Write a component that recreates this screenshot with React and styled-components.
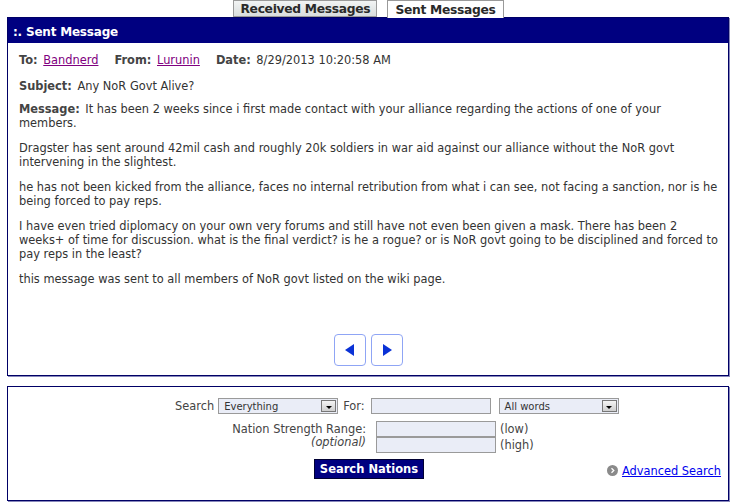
import React from "react";
import styled, { createGlobalStyle } from "styled-components";

const Global = createGlobalStyle`
  html, body { margin: 0; padding: 0; background: #fff; }
  body { font-family: "DejaVu Sans", Verdana, sans-serif; font-size: 11.4px; color: #333; }
`;

const Page = styled.div`
  width: 731px;
  height: 504px;
  box-sizing: border-box;
  padding: 0 2px 0 7px;
  display: flex;
  flex-direction: column;
`;

const Tabs = styled.div`
  display: flex;
  justify-content: center;
  gap: 10px;
  height: 17px;
  padding-left: 1px;
  position: relative;
  z-index: 1;
`;

const Tab = styled.div`
  box-sizing: border-box;
  height: ${(p) => (p.$active ? "18px" : "17px")};
  padding: 0 ${(p) => (p.$active ? "7px" : "6px")};
  border: 1px solid #9a9a9a;
  border-bottom: ${(p) => (p.$active ? "none" : "1px solid #9a9a9a")};
  background: ${(p) => (p.$active ? "#fff" : "linear-gradient(#f2f4f4, #d9dddd)")};
  font-family: "DejaVu Sans", Tahoma, sans-serif;
  font-weight: bold;
  font-size: 12.3px;
  letter-spacing: -0.3px;
  color: #2a2a2a;
  line-height: 16px;
  padding-top: ${(p) => (p.$active ? "1px" : "0")};
  white-space: nowrap;
`;

const Panel = styled.div`
  box-sizing: border-box;
  border: 1px solid #000066;
  box-shadow: 1px 1px 0 #8888bb;
  display: flex;
  flex-direction: column;
  height: ${(p) => p.$h}px;
  margin-top: ${(p) => p.$mt || 0}px;
  background: #fff;
`;

const Header = styled.div`
  height: 25px;
  background: #000080;
  color: #fff;
  font-weight: bold;
  font-size: 12px;
  letter-spacing: -0.2px;
  line-height: 28px;
  padding-left: 5px;
`;

const Body = styled.div`
  padding: 10px 11px 0 11px;
  flex: 1;
  display: flex;
  flex-direction: column;
`;

const Para = styled.p`
  margin: 0 0 ${(p) => (p.$mb !== undefined ? p.$mb : 11)}px 0;
  line-height: 14px;
  font-size: 11.4px;
  white-space: nowrap;
`;

const Label = styled.b`
  font-weight: bold;
  color: #444;
  margin-right: 2px;
`;

const UserLink = styled.a`
  color: #800080;
  text-decoration: underline;
  margin-right: 16px;
`;

const Nav = styled.div`
  margin-top: auto;
  margin-bottom: 9px;
  display: flex;
  justify-content: center;
  gap: 5px;
`;

const NavBtn = styled.button`
  width: 32px;
  height: 32px;
  border: 1px solid #8fa5f5;
  border-radius: 4px;
  background: #fff;
  padding: 0;
  display: flex;
  align-items: center;
  justify-content: center;
`;

const SearchBody = styled.div`
  display: flex;
  flex-direction: column;
  padding-top: 11px;
`;

const Row = styled.div`
  display: flex;
  align-items: center;
  padding-left: ${(p) => p.$pl || 0}px;
  height: ${(p) => p.$h || 16}px;
`;

const Text = styled.span`
  font-size: 11.4px;
  color: #444;
  margin: 0 ${(p) => p.$mr || 0}px 0 ${(p) => p.$ml || 0}px;
  font-style: ${(p) => (p.$italic ? "italic" : "normal")};
  white-space: nowrap;
`;

const SelectBox = styled.div`
  box-sizing: border-box;
  width: ${(p) => p.$w}px;
  height: 16px;
  border: 1px solid #9a9a9a;
  background: #eaedf7;
  display: flex;
  align-items: center;
  justify-content: space-between;
  padding: 0 1px 0 5px;
  font-size: 10px;
  color: #333;
`;

const Arrow = styled.span`
  box-sizing: border-box;
  width: 15px;
  height: 12px;
  border: 1px solid #777;
  background: linear-gradient(#f4f4f4, #cfcfcf);
  display: flex;
  align-items: flex-end;
  justify-content: center;
  padding-bottom: 2px;
  &::after {
    content: "";
    border-left: 3px solid transparent;
    border-right: 3px solid transparent;
    border-top: 3px solid #000;
  }
`;

const Input = styled.div`
  box-sizing: border-box;
  width: ${(p) => p.$w}px;
  height: ${(p) => p.$h || 16}px;
  border: 1px solid #9a9a9a;
  background: #eaedf7;
  margin: 0 ${(p) => p.$mr || 0}px 0 ${(p) => p.$ml || 0}px;
`;

const RangeWrap = styled.div`
  display: flex;
  margin-top: 7px;
`;

const RangeLabel = styled.div`
  width: 358px;
  text-align: right;
  display: flex;
  flex-direction: column;
  align-items: flex-end;
  line-height: 13px;
  padding-top: 2px;
`;

const RangeInputs = styled.div`
  display: flex;
  flex-direction: column;
  margin-left: 10px;
`;

const RangeRow = styled.div`
  display: flex;
  align-items: center;
  height: 16px;
`;

const ButtonRow = styled.div`
  display: grid;
  grid-template-columns: 1fr auto 1fr;
  align-items: center;
  margin-top: 6px;
`;

const SearchButton = styled.button`
  grid-column: 2;
  background: #000080;
  color: #fff;
  border: 1px solid #000033;
  font-family: "DejaVu Sans", Verdana, sans-serif;
  font-weight: bold;
  font-size: 11.5px;
  height: 20px;
  padding: 0 5px;
  margin-left: 2px;
`;

const Advanced = styled.div`
  grid-column: 3;
  justify-self: end;
  display: flex;
  align-items: center;
  gap: 4px;
  padding-right: 7px;
  padding-top: 3px;
`;

const AdvLink = styled.a`
  color: #0000ee;
  text-decoration: underline;
  font-size: 11.4px;
`;

const Dot = () => (
  <svg width="11" height="11" viewBox="0 0 11 11">
    <circle cx="5.5" cy="5.5" r="5.5" fill="#8a8a8a" />
    <path d="M4.5 3.2 L6.8 5.5 L4.5 7.8" stroke="#fff" strokeWidth="1.3" fill="none" />
  </svg>
);

const Tri = ({ dir }) => (
  <svg width="10" height="12" viewBox="0 0 10 12">
    {dir === "left" ? (
      <polygon points="9,0 9,12 0,6" fill="#0a32d6" />
    ) : (
      <polygon points="1,0 1,12 10,6" fill="#0a32d6" />
    )}
  </svg>
);

export default function App() {
  return (
    <>
      <Global />
      <Page>
        <Tabs>
          <Tab>Received Messages</Tab>
          <Tab $active>Sent Messages</Tab>
        </Tabs>
        <Panel $h={359}>
          <Header>:. Sent Message</Header>
          <Body>
            <Para $mb={12}>
              <Label>To:</Label> <UserLink href="#">Bandnerd</UserLink>
              <Label>From:</Label> <UserLink href="#">Lurunin</UserLink>
              <Label>Date:</Label> 8/29/2013 10:20:58 AM
            </Para>
            <Para $mb={9}>
              <Label>Subject:</Label> Any NoR Govt Alive?
            </Para>
            <Para>
              <Label>Message:</Label> It has been 2 weeks since i first made contact with your alliance regarding the actions of one of your
              <br />
              members.
            </Para>
            <Para>
              Dragster has sent around 42mil cash and roughly 20k soldiers in war aid against our alliance without the NoR govt
              <br />
              intervening in the slightest.
            </Para>
            <Para>
              he has not been kicked from the alliance, faces no internal retribution from what i can see, not facing a sanction, nor is he
              <br />
              being forced to pay reps.
            </Para>
            <Para>
              I have even tried diplomacy on your own very forums and still have not even been given a mask. There has been 2
              <br />
              weeks+ of time for discussion. what is the final verdict? is he a rogue? or is NoR govt going to be disciplined and forced to
              <br />
              pay reps in the least?
            </Para>
            <Para>this message was sent to all members of NoR govt listed on the wiki page.</Para>
            <Nav>
              <NavBtn aria-label="previous">
                <Tri dir="left" />
              </NavBtn>
              <NavBtn aria-label="next">
                <Tri dir="right" />
              </NavBtn>
            </Nav>
          </Body>
        </Panel>
        <Panel $h={115} $mt={10}>
          <SearchBody>
            <Row $pl={167}>
              <Text $mr={4}>Search</Text>
              <SelectBox $w={120}>
                Everything
                <Arrow />
              </SelectBox>
              <Text $ml={5} $mr={6}>For:</Text>
              <Input $w={120} $mr={8} />
              <SelectBox $w={120}>
                All words
                <Arrow />
              </SelectBox>
            </Row>
            <RangeWrap>
              <RangeLabel>
                <Text>Nation Strength Range:</Text>
                <Text $italic>(optional)</Text>
              </RangeLabel>
              <RangeInputs>
                <RangeRow>
                  <Input $w={120} $mr={4} />
                  <Text>(low)</Text>
                </RangeRow>
                <RangeRow>
                  <Input $w={120} $mr={4} />
                  <Text>(high)</Text>
                </RangeRow>
              </RangeInputs>
            </RangeWrap>
            <ButtonRow>
              <SearchButton>Search Nations</SearchButton>
              <Advanced>
                <Dot />
                <AdvLink href="#">Advanced Search</AdvLink>
              </Advanced>
            </ButtonRow>
          </SearchBody>
        </Panel>
      </Page>
    </>
  );
}
